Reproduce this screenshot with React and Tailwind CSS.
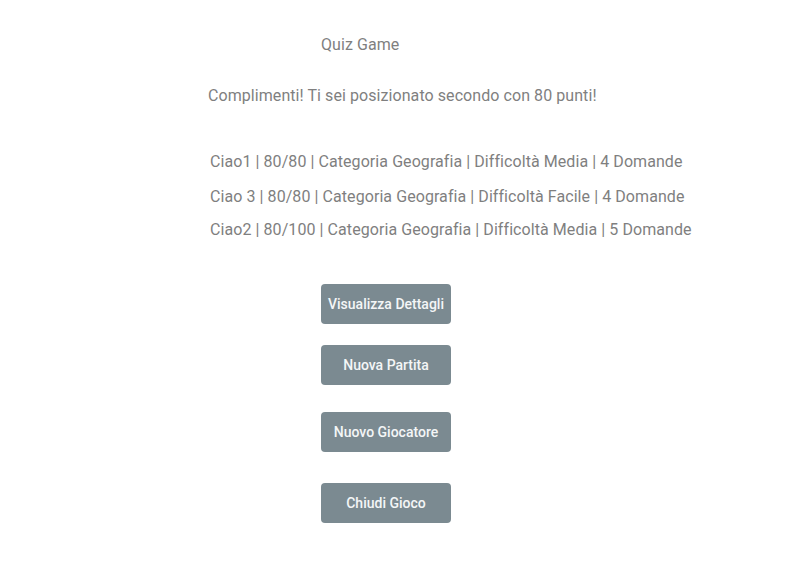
import React from "react";

const rows = [
  "Ciao1 | 80/80 | Categoria Geografia | Difficoltà Media | 4 Domande",
  "Ciao 3 | 80/80 | Categoria Geografia | Difficoltà Facile | 4 Domande",
  "Ciao2 | 80/100 | Categoria Geografia | Difficoltà Media | 5 Domande",
];

function Btn({ children, className = "" }) {
  return (
    <button
      className={
        "w-[130px] h-[40px] rounded-[4px] bg-[#7b8a91] text-[#f4f6f7] text-[14px] font-medium tracking-[0px] flex items-center justify-center " +
        className
      }
    >
      {children}
    </button>
  );
}

export default function App() {
  return (
    <div
      className="w-[795px] h-[565px] bg-white text-[#7f7f7f] text-[16px] leading-[24px] tracking-[0.07px] flex flex-col"
      style={{ fontFamily: "Roboto, 'Liberation Sans', sans-serif" }}
    >
      <div className="ml-[321px] mt-[33px]">Quiz Game</div>
      <div className="ml-[208px] mt-[27px]">
        Complimenti! Ti sei posizionato secondo con 80 punti!
      </div>
      <div className="ml-[210px] mt-[42px] flex flex-col">
        <div>{rows[0]}</div>
        <div className="mt-[11px]">{rows[1]}</div>
        <div className="mt-[9px]">{rows[2]}</div>
      </div>
      <div className="ml-[321px] mt-[42px] flex flex-col">
        <Btn>Visualizza Dettagli</Btn>
        <Btn className="mt-[21px]">Nuova Partita</Btn>
        <Btn className="mt-[27px]">Nuovo Giocatore</Btn>
        <Btn className="mt-[31px]">Chiudi Gioco</Btn>
      </div>
    </div>
  );
}
